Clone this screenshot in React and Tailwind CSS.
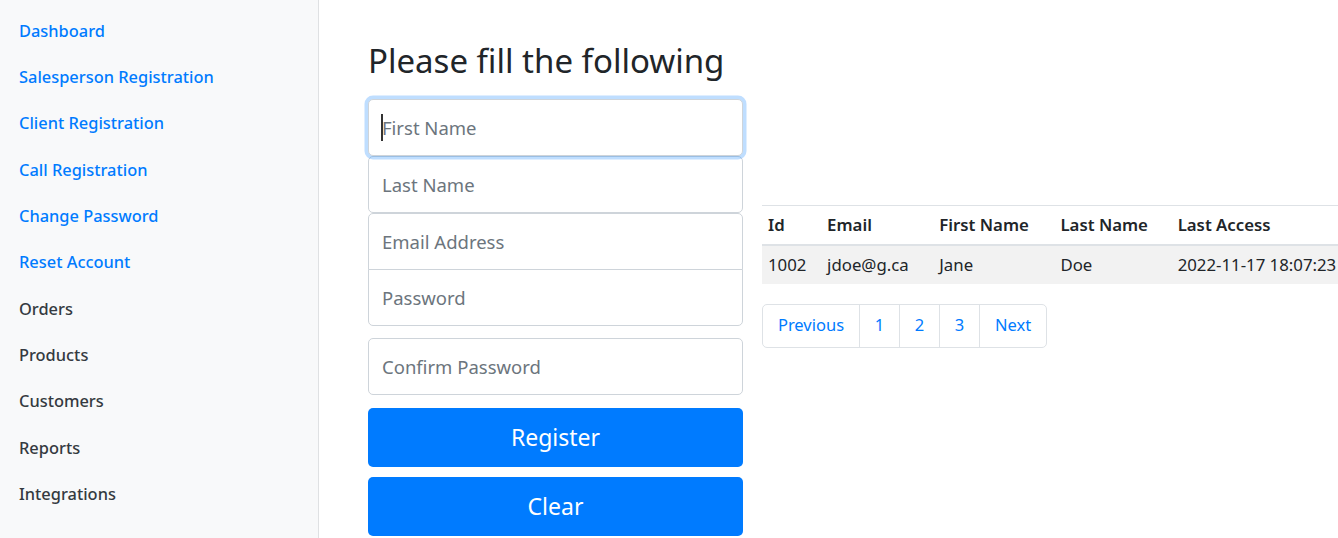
const NAV = [
  { label: 'Dashboard', active: true },
  { label: 'Salesperson Registration', active: true },
  { label: 'Client Registration', active: true },
  { label: 'Call Registration', active: true },
  { label: 'Change Password', active: true },
  { label: 'Reset Account', active: true },
  { label: 'Orders' },
  { label: 'Products' },
  { label: 'Customers' },
  { label: 'Reports' },
  { label: 'Integrations' },
]

const inputCls =
  'w-full h-[57px] px-[13px] text-[18.5px] text-[#495057] bg-white border border-[#ced4da] outline-none placeholder:text-[#6c757d]'

function Sidebar() {
  return (
    <nav className="w-[319px] shrink-0 bg-[#f8f9fa] border-r border-[#dfe1e3] pt-[8px] min-h-[538px]">
      {NAV.map(n => (
        <a
          key={n.label}
          href="#"
          className={`h-[46.3px] flex items-center px-[19px] text-[16.4px] font-medium ${n.active ? 'text-[#007bff]' : 'text-[#343a40]'}`}
        >
          {n.label}
        </a>
      ))}
    </nav>
  )
}

function RegisterForm() {
  return (
    <div className="w-[375px] shrink-0">
      <h1 className="text-[33px] leading-[43px] text-[#212529] mt-[39px] mb-[17px] whitespace-nowrap">Please fill the following</h1>
      <div className="relative">
        <input
          placeholder="First Name"
          className={`${inputCls} rounded-[5px] border-[#80bdff] shadow-[0_0_0_3.5px_rgba(0,123,255,0.25)] relative z-10`}
        />
        <span className="absolute left-[13px] top-[15px] w-[2px] h-[27px] bg-[#333] z-20" />
      </div>
      <input placeholder="Last Name" className={`${inputCls} rounded-[5px] h-[56px]`} />
      <input placeholder="Email Address" className={`${inputCls} rounded-t-[5px]`} />
      <input placeholder="Password" className={`${inputCls} rounded-b-[5px] -mt-[1px]`} />
      <input placeholder="Confirm Password" className={`${inputCls} rounded-[5px] mt-[12px]`} />
      <button className="w-full h-[59px] mt-[13px] rounded-[5px] bg-[#007bff] text-white text-[23px]">Register</button>
      <button className="w-full h-[59px] mt-[10px] rounded-[5px] bg-[#007bff] text-white text-[23px]">Clear</button>
    </div>
  )
}

const COLS = [
  { h: 'Id', w: 'w-[59px]' },
  { h: 'Email', w: 'w-[112px]' },
  { h: 'First Name', w: 'w-[121px]' },
  { h: 'Last Name', w: 'w-[117px]' },
  { h: 'Last Access', w: 'w-[190px]' },
]
const ROW = ['1002', 'jdoe@g.ca', 'Jane', 'Doe', '2022-11-17 18:07:23']

function UserTable() {
  return (
    <div className="pt-[205px] ml-[19px] min-w-0 flex-1">
      <table className="w-[600px] table-fixed border-collapse text-[16.8px] text-[#212529]">
        <thead>
          <tr className="border-t border-[#dee2e6] border-b-2">
            {COLS.map(c => (
              <th key={c.h} className={`${c.w} h-[39px] px-[6px] text-left font-semibold whitespace-nowrap`}>{c.h}</th>
            ))}
          </tr>
        </thead>
        <tbody>
          <tr className="bg-[#f2f2f2]">
            {ROW.map((v, i) => (
              <td key={i} className="h-[39px] px-[6px] whitespace-nowrap">{v}</td>
            ))}
          </tr>
        </tbody>
      </table>
      <div className="mt-[20px] flex w-fit border border-[#dee2e6] rounded-[5px] text-[16.5px] text-[#007bff] h-[44px]">
        <span className="w-[96px] flex items-center justify-center">Previous</span>
        <span className="w-[40px] flex items-center justify-center border-l border-[#dee2e6]">1</span>
        <span className="w-[40px] flex items-center justify-center border-l border-[#dee2e6]">2</span>
        <span className="w-[40px] flex items-center justify-center border-l border-[#dee2e6]">3</span>
        <span className="w-[67px] flex items-center justify-center border-l border-[#dee2e6]">Next</span>
      </div>
    </div>
  )
}

export default function App() {
  return (
    <div className="flex w-[1338px] h-[538px] overflow-hidden bg-white font-['Segoe_UI','Noto_Sans',sans-serif]">
      <Sidebar />
      <main className="flex pl-[49px] flex-1 min-w-0">
        <RegisterForm />
        <UserTable />
      </main>
    </div>
  )
}
